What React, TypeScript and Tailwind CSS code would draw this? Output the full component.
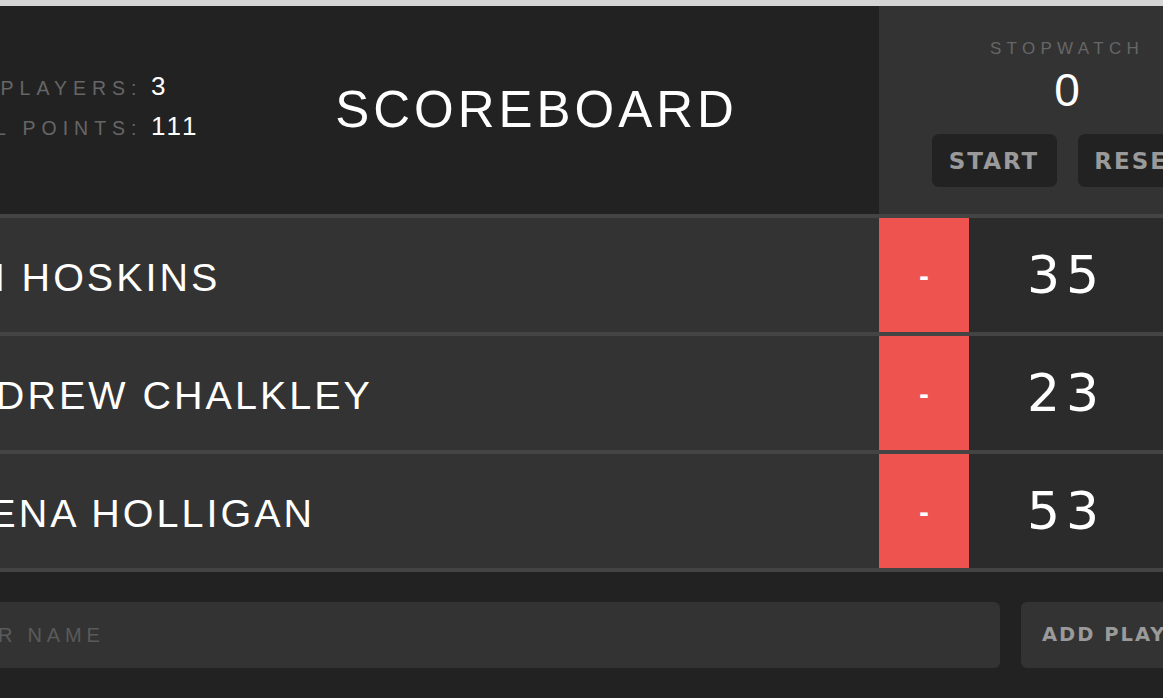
import React from "react";

type Player = { id: number; name: string; score: number };

const players: Player[] = [
  { id: 1, name: "Jim Hoskins", score: 35 },
  { id: 2, name: "Andrew Chalkley", score: 23 },
  { id: 3, name: "Alena Holligan", score: 53 },
];

const sans = { fontFamily: '"Liberation Sans", Arial, sans-serif' };
const wide = { fontFamily: '"DejaVu Sans", Verdana, sans-serif' };

const App: React.FC = () => {
  const total = players.reduce((sum, p) => sum + p.score, 0);

  return (
    <div className="w-[1163px] h-[698px] overflow-hidden bg-[#d5d5d5] pt-[6px]" style={sans}>
      <div className="ml-[-130px] w-[1385px] bg-[#222]">
        {/* Header */}
        <div className="flex h-[212px] border-b-4 border-[#444] uppercase">
          <div className="w-[329.5px] flex items-center justify-end pb-[8px]">
            <div className="grid grid-cols-[auto_auto] grid-rows-[40px_40px] items-baseline gap-x-[8.5px]">
              <div className="text-right text-[19.5px] leading-[40px] tracking-[6px] text-[#666]">Players:</div>
              <div className="text-[26px] leading-[40px] tracking-[3px] text-white">{players.length}</div>
              <div className="text-right text-[19.5px] leading-[40px] tracking-[6px] text-[#666]">Total Points:</div>
              <div className="text-[26px] leading-[40px] tracking-[3px] text-white">{total}</div>
            </div>
          </div>

          <h1 className="flex-1 flex items-center justify-center pr-[5.5px] pb-[2px] text-[51px] leading-none tracking-[4px] font-normal text-white">
            Scoreboard
          </h1>

          <div className="w-[376px] bg-[#333] flex flex-col items-center pt-[34px]">
            <div className="text-[17px] leading-none tracking-[5.3px] text-[#666]">Stopwatch</div>
            <div className="mt-[10px] text-[46px] leading-none text-white">0</div>
            <div className="mt-[21px] flex gap-[21px]" style={wide}>
              <button className="w-[125px] h-[53px] rounded-[7px] bg-[#222] text-[#9a9a9a] text-[23px] font-bold tracking-[2px] pt-[2px]">
                START
              </button>
              <button className="w-[125px] h-[53px] rounded-[7px] bg-[#222] text-[#9a9a9a] text-[23px] font-bold tracking-[2px] pt-[2px]">
                RESET
              </button>
            </div>
          </div>
        </div>

        {/* Players */}
        {players.map((p) => (
          <div key={p.id} className="flex h-[118px] border-b-4 border-[#444]">
            <div className="flex-1 bg-[#333] flex items-center pl-[65px] pt-[5px] text-white uppercase text-[39.5px] leading-none tracking-[3px]">
              {p.name}
            </div>
            <div className="flex">
              <button className="w-[90px] bg-[#ef5350] text-white font-bold text-[24px] pt-[4px]" style={wide}>
                -
              </button>
              <div className="w-[194px] bg-[#2b2b2b] flex items-center justify-center text-white text-[52px] leading-none tracking-[6px]" style={wide}>
                {p.score}
              </div>
              <button className="w-[92px] bg-[#66bb6a] text-white font-bold text-[24px]" style={wide}>
                +
              </button>
            </div>
          </div>
        ))}

        {/* Add player form */}
        <form className="flex gap-[21px] px-[30px] py-[30px]">
          <input
            type="text"
            placeholder="Player Name"
            className="flex-1 h-[66px] rounded-[6px] bg-[#333] pl-[11px] text-[20px] tracking-[4.8px] uppercase text-white placeholder:text-[#5a5a5a] outline-none"
            style={sans}
          />
          <button
            type="button"
            className="w-[204px] h-[66px] rounded-[6px] bg-[#333] text-left pl-[21px] text-[#9a9a9a] text-[19.5px] font-bold tracking-[2px]"
            style={wide}
          >
            ADD PLAYER
          </button>
        </form>
      </div>
    </div>
  );
};

export default App;
